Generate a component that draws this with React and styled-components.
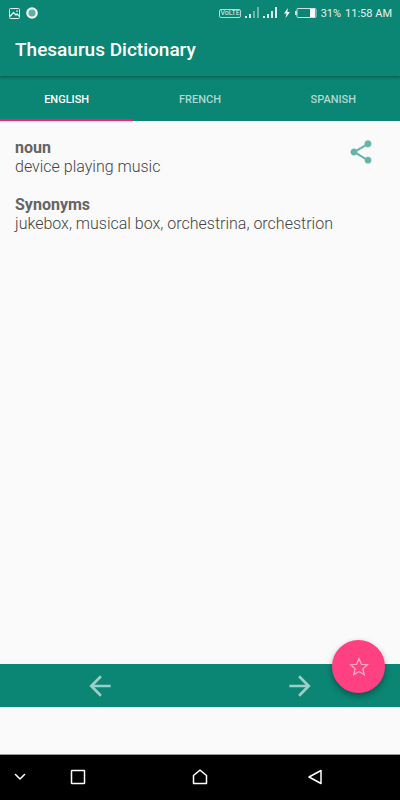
import React, { useState } from 'react';
import styled, { createGlobalStyle } from 'styled-components';

const tabs = ['English', 'French', 'Spanish'];

const entries = [
  { title: 'noun', text: 'device playing music' },
  { title: 'Synonyms', text: 'jukebox, musical box, orchestrina, orchestrion' },
];

const App = () => {
  const [activeTab, setActiveTab] = useState('English');

  return (
    <>
      <GlobalStyle />
      <AppContainer>
        <StatusBar>
          <StatusGroup>
            <PictureIcon />
            <RecordIcon />
          </StatusGroup>
          <StatusGroup>
            <VolteBadge>VoLTE</VolteBadge>
            <SignalIcon level={2} />
            <SignalIcon level={4} />
            <BoltIcon />
            <BatteryIcon />
            <span>31%</span>
            <span>11:58 AM</span>
          </StatusGroup>
        </StatusBar>

        <TitleBar>
          <Title>Thesaurus Dictionary</Title>
        </TitleBar>

        <TabBar role="tablist">
          {tabs.map((tab) => (
            <Tab
              key={tab}
              role="tab"
              aria-selected={tab === activeTab}
              $active={tab === activeTab}
              onClick={() => setActiveTab(tab)}
            >
              {tab}
            </Tab>
          ))}
        </TabBar>

        <Content>
          <Entries>
            {entries.map((entry) => (
              <section key={entry.title}>
                <EntryTitle>{entry.title}</EntryTitle>
                <EntryText>{entry.text}</EntryText>
              </section>
            ))}
          </Entries>
          <ShareButton aria-label="Share">
            <svg width="28" height="28" viewBox="0 0 24 24" fill="#67b4a9">
              <path d="M18 16.08c-.76 0-1.44.3-1.96.77L8.91 12.7c.05-.23.09-.46.09-.7s-.04-.47-.09-.7l7.05-4.11c.54.5 1.25.81 2.04.81 1.66 0 3-1.34 3-3s-1.34-3-3-3-3 1.34-3 3c0 .24.04.47.09.7L8.04 9.81C7.5 9.31 6.79 9 6 9c-1.66 0-3 1.34-3 3s1.34 3 3 3c.79 0 1.5-.31 2.04-.81l7.12 4.16c-.05.21-.08.43-.08.65 0 1.61 1.31 2.92 2.92 2.92s2.92-1.31 2.92-2.92-1.31-2.92-2.92-2.92z" />
            </svg>
          </ShareButton>
        </Content>

        <Pager>
          <PagerButton aria-label="Previous">
            <svg width="32" height="32" viewBox="0 0 24 24" fill="#9dcec7">
              <path d="M20 11H7.83l5.59-5.59L12 4l-8 8 8 8 1.41-1.41L7.83 13H20v-2z" />
            </svg>
          </PagerButton>
          <PagerButton aria-label="Next">
            <svg width="32" height="32" viewBox="0 0 24 24" fill="#9dcec7">
              <path d="M12 4l-1.41 1.41L16.17 11H4v2h12.17l-5.58 5.59L12 20l8-8z" />
            </svg>
          </PagerButton>
          <FavoriteButton aria-label="Add to favorites">
            <svg width="20" height="20" viewBox="0 0 20 20" fill="none" stroke="#ffb0c8" strokeWidth="1.2">
              <path d="M10 1.500L12.350 7.260L18.560 7.720L13.800 11.740L15.290 17.780L10 14.500L4.710 17.780L6.200 11.740L1.440 7.720L7.650 7.260z" />
            </svg>
          </FavoriteButton>
        </Pager>

        <NavBar>
          <NavButton aria-label="Hide">
            <svg width="12" height="8" {...stroke}>
              <path d="M1.5 1.5L6 6l4.500-4.500" />
            </svg>
          </NavButton>
          <NavButton aria-label="Recent apps">
            <svg width="16" height="16" {...stroke}>
              <rect x="1.500" y="1.500" width="13" height="13" rx="0.500" />
            </svg>
          </NavButton>
          <NavButton aria-label="Home">
            <svg width="16" height="16" {...stroke}>
              <path d="M1.500 6.500L8 1.200l6.500 5.300v8h-13z" />
            </svg>
          </NavButton>
          <NavButton aria-label="Back">
            <svg width="16" height="16" {...stroke}>
              <path d="M14 1.500v13L2 8z" />
            </svg>
          </NavButton>
        </NavBar>
      </AppContainer>
    </>
  );
};

const stroke = {
  fill: 'none',
  stroke: '#fff',
  strokeWidth: 1.5,
  strokeLinejoin: 'round',
  strokeLinecap: 'round',
};

const PictureIcon = () => (
  <svg width="14" height="12" fill="none" stroke="#e3f1ef">
    <rect x="1.500" y="1.500" width="10" height="10" rx="1" />
    <path d="M2 9.500l3.500-4 2.500 2.500 1-1 2.500 2.500" strokeWidth="1.300" />
    <circle cx="9" cy="4" r="0.500" />
  </svg>
);

const RecordIcon = () => (
  <svg width="12" height="12">
    <circle cx="6" cy="6" r="5.800" fill="#f2f8f7" />
    <circle cx="6" cy="6" r="3.500" fill="#62aea3" />
  </svg>
);

// bars above the level are drawn dimmed
const SignalIcon = ({ level }) => (
  <svg width="14" height="12" fill="#fff">
    {[2, 4, 7, 11].map((height, index) => (
      <rect
        key={height}
        x={index * 4}
        y={11 - height}
        width="2"
        height={height}
        opacity={index < level ? 0.85 : 0.4}
      />
    ))}
  </svg>
);

const BoltIcon = () => (
  <svg width="10" height="10" viewBox="-3 0 10 10" fill="#fff">
    <path d="M4 0L0 5.500h2.500L1.500 10 6 4H3.300z" />
  </svg>
);

const BatteryIcon = () => (
  <svg width="22" height="12">
    <rect x="2" y="1.500" width="19" height="9" rx="1" fill="none" stroke="#c5e2dd" />
    <rect x="0" y="4" width="2" height="4" fill="#c5e2dd" />
    <rect x="15" y="2" width="5" height="8" fill="#fff" />
  </svg>
);

const GlobalStyle = createGlobalStyle`
  * {
    box-sizing: border-box;
  }

  body {
    margin: 0;
    background: #fafafa;
    font-family: Roboto, sans-serif;
  }

  button {
    padding: 0;
    border: none;
    background: none;
    font-family: inherit;
    cursor: pointer;
  }

  svg {
    display: block;
    flex-shrink: 0;
  }
`;

const AppContainer = styled.div`
  display: flex;
  flex-direction: column;
  min-height: 100vh;
`;

const StatusBar = styled.div`
  display: flex;
  align-items: center;
  justify-content: space-between;
  height: 26px;
  padding: 0 8px;
  background: #0b8574;
  color: #e7f3f1;
  font-size: 11px;
`;

const StatusGroup = styled.div`
  display: flex;
  align-items: center;
  gap: 4px;
`;

const VolteBadge = styled.span`
  border: 1px solid #b5dad5;
  border-radius: 2px;
  font-size: 7px;
  line-height: 7px;
`;

const TitleBar = styled.header`
  display: flex;
  align-items: center;
  height: 50px;
  padding: 0 15px 4px;
  background: #0b8574;
  box-shadow: 0 1px 3px rgba(0, 0, 0, 0.4);
  clip-path: inset(0 0 -4px 0);
  z-index: 1;
`;

const Title = styled.h1`
  margin: 0;
  color: #fff;
  font-size: 19px;
  font-weight: 500;
`;

const TabBar = styled.div`
  display: grid;
  grid-template-columns: repeat(3, 1fr);
  height: 45px;
  background: #0b8574;
`;

const Tab = styled.button`
  padding-top: 3px;
  border-bottom: 2px solid ${(props) => (props.$active ? '#ff1a75' : 'transparent')};
  color: ${(props) => (props.$active ? '#fff' : '#b0d8d2')};
  font-size: 11px;
  font-weight: 500;
  text-transform: uppercase;
`;

const Content = styled.main`
  display: flex;
  flex: 1;
  align-items: flex-start;
  padding: 17px 25px 17px 15px;
`;

const Entries = styled.div`
  display: flex;
  flex: 1;
  flex-direction: column;
  gap: 19px;
  color: #646464;
  font-size: 16px;
  line-height: 19px;
`;

const EntryTitle = styled.h2`
  margin: 0;
  font-size: 16px;
  font-weight: 700;
`;

const EntryText = styled.p`
  margin: 0;
  color: #444;
  font-weight: 300;
`;

const ShareButton = styled.button`
  flex-shrink: 0;
`;

const Pager = styled.div`
  position: relative;
  display: grid;
  grid-template-columns: 1fr 1fr;
  height: 43px;
  margin-bottom: 47px;
  background: #0b8574;
`;

const PagerButton = styled.button`
  display: flex;
  align-items: center;
  justify-content: center;
`;

const FavoriteButton = styled.button`
  position: absolute;
  top: -24px;
  right: 15px;
  display: flex;
  align-items: center;
  justify-content: center;
  width: 53px;
  height: 53px;
  border-radius: 50%;
  background: #ff4081;
  box-shadow: 0 3px 6px rgba(0, 0, 0, 0.35);
`;

const NavBar = styled.nav`
  display: grid;
  grid-template-columns: 40px 75px 1fr 60px 55px;
  height: 46px;
  padding-bottom: 1px;
  border-top: 1px solid #999;
  background: #000;
`;

const NavButton = styled.button`
  display: flex;
  align-items: center;
  justify-content: center;
`;

export default App;
